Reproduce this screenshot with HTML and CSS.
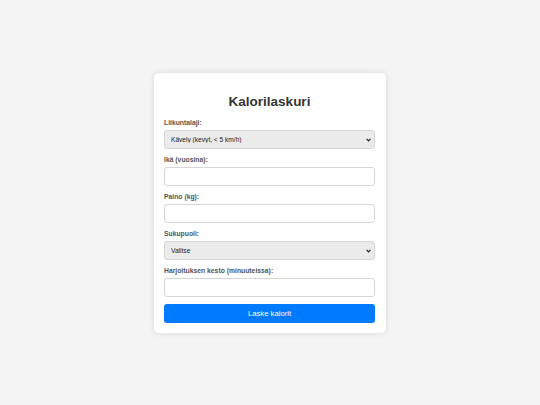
FILE: index.html
```html
<!DOCTYPE html>
<html lang="fi">
<head>
<meta charset="utf-8">
<title>Kalorilaskuri</title>
<link rel="stylesheet" href="styles.css">
</head>
<body>
<div class="card">
  <h2 class="title">Kalorilaskuri</h2>
  <form class="form">
    <label class="label" for="laji">Liikuntalaji:</label>
    <div class="select-wrap">
      <select class="control select" id="laji">
        <option>Kävely (kevyt, &lt; 5 km/h)</option>
      </select>
      <svg class="chevron" width="5" height="4" viewBox="0 0 5 4"><path d="M0.6 0.8 L2.5 2.9 L4.4 0.8" fill="none" stroke="#222" stroke-width="1.2"/></svg>
    </div>
    <label class="label" for="ika">Ikä (vuosina):</label>
    <input class="control" id="ika" type="number">
    <label class="label" for="paino">Paino (kg):</label>
    <input class="control" id="paino" type="number">
    <label class="label" for="sp">Sukupuoli:</label>
    <div class="select-wrap">
      <select class="control select" id="sp">
        <option>Valitse</option>
      </select>
      <svg class="chevron" width="5" height="4" viewBox="0 0 5 4"><path d="M0.6 0.8 L2.5 2.9 L4.4 0.8" fill="none" stroke="#222" stroke-width="1.2"/></svg>
    </div>
    <label class="label" for="kesto">Harjoituksen kesto (minuuteissa):</label>
    <input class="control" id="kesto" type="number">
    <button class="button" type="button">Laske kalorit</button>
  </form>
</div>
</body>
</html>
```
FILE: styles.css
```css
html, body {
  margin: 0;
  padding: 0;
}
body {
  background: #f4f4f4;
  font-family: "Liberation Sans", Arial, sans-serif;
  min-height: 100vh;
  display: flex;
  align-items: center;
  justify-content: center;
}
.card {
  width: 232px;
  box-sizing: border-box;
  background: #ffffff;
  border-radius: 5px;
  box-shadow: 0 0 6px rgba(0, 0, 0, 0.12);
  padding: 11px 11px 10px 10px;
}
.title {
  margin: 10px 0 9px;
  font-size: 13.5px;
  line-height: 15px;
  font-weight: bold;
  text-align: center;
  color: #333333;
}
.form {
  display: flex;
  flex-direction: column;
}
.label {
  display: block;
  font-size: 6.8px;
  line-height: 9px;
  font-weight: bold;
  color: #555555;
  margin-bottom: 3px;
}
.select-wrap {
  position: relative;
}
.control {
  box-sizing: border-box;
  width: 100%;
  height: 19px;
  margin: 0 0 6px;
  padding: 0 5px;
  border: 1px solid #d6d6d6;
  border-radius: 3px;
  background: #ffffff;
  font-family: "Liberation Sans", Arial, sans-serif;
  font-size: 6.6px;
  color: #222222;
  display: block;
}
.select {
  -webkit-appearance: none;
  appearance: none;
  background-color: #ebebeb;
  padding-left: 6px;
}
.chevron {
  position: absolute;
  right: 4px;
  top: 8px;
  pointer-events: none;
}
.button {
  margin-top: 1px;
  height: 19px;
  width: 100%;
  border: none;
  border-radius: 3px;
  background: #007bff;
  color: #ffffff;
  font-family: "Liberation Sans", Arial, sans-serif;
  font-size: 7.7px;
  cursor: pointer;
}
```
